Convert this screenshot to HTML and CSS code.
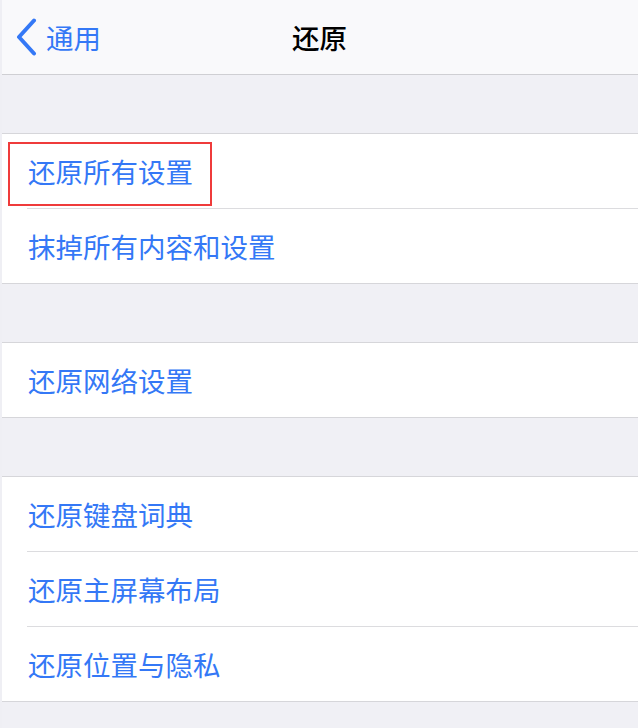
FILE: index.html
```html
<!DOCTYPE html>
<html lang="zh-CN">
<head>
<meta charset="utf-8">
<link rel="stylesheet" href="styles.css">
</head>
<body>
<div class="page">
  <header class="nav">
    <div class="back">
      <svg class="chev" width="24" height="38" viewBox="0 0 24 38"><path d="M20 2.5 L5 19 L20 35.5" fill="none" stroke="#3478f6" stroke-width="4" stroke-linecap="round" stroke-linejoin="round"/></svg>
      <span class="back-text">通用</span>
    </div>
    <div class="title">还原</div>
  </header>
  <div class="gap"></div>
  <section class="group">
    <div class="row"><span class="label highlight">还原所有设置</span></div>
    <div class="row"><span class="label">抹掉所有内容和设置</span></div>
  </section>
  <div class="gap"></div>
  <section class="group">
    <div class="row"><span class="label">还原网络设置</span></div>
  </section>
  <div class="gap"></div>
  <section class="group">
    <div class="row"><span class="label">还原键盘词典</span></div>
    <div class="row"><span class="label">还原主屏幕布局</span></div>
    <div class="row"><span class="label">还原位置与隐私</span></div>
  </section>
</div>
</body>
</html>
```
FILE: styles.css
```css
html, body {
  margin: 0;
  padding: 0;
  background: #efeff4;
  font-family: "Noto Sans CJK SC", "Noto Sans", sans-serif;
}
.page {
  margin-left: 2px;
  width: 636px;
  height: 728px;
  background: #f0f0f5;
}
.nav {
  height: 74px;
  background: #f9f9fb;
  border-bottom: 1px solid #cfcfd3;
  position: relative;
  display: flex;
  align-items: center;
}
.back {
  display: flex;
  align-items: center;
  padding-left: 12px;
  gap: 8px;
}
.chev { display: block; }
.back-text {
  color: #3478f6;
  font-size: 27.5px;
  line-height: 36px;
}
.title {
  position: absolute;
  left: 290px;
  top: 19px;
  font-size: 27.5px;
  line-height: 36px;
  font-weight: 500;
  color: #000;
}
.gap {
  height: 58px;
}
.group {
  background: #fff;
  border-top: 1px solid #d6d6da;
  border-bottom: 1px solid #d6d6da;
}
.row {
  height: 74px;
  display: flex;
  align-items: center;
  padding-left: 26px;
  position: relative;
}
.row + .row {
  border-top: 1px solid #dcdcdf;
  margin-left: 25px;
  padding-left: 1px;
}
.label {
  color: #3478f6;
  font-size: 27.5px;
  line-height: 36px;
  position: relative;
}
.highlight::after {
  content: "";
  position: absolute;
  box-sizing: border-box;
  left: -20px;
  top: -11px;
  width: 204px;
  height: 64px;
  border: 2.5px solid #ef3b3b;
}
```
